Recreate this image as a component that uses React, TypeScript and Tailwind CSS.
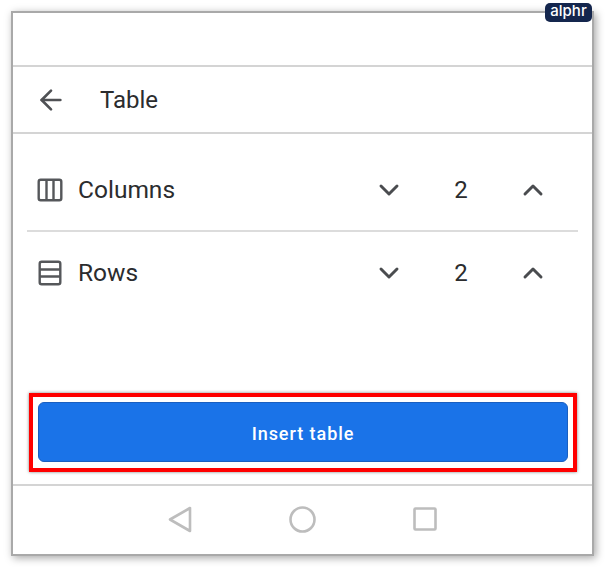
import { ArrowLeft, ChevronDown, ChevronUp } from "lucide-react";

function ColumnsIcon() {
  return (
    <svg width="26" height="24" viewBox="0 0 26 24" fill="none" stroke="#55575a" strokeWidth="2.4">
      <rect x="1.7" y="1.7" width="22.6" height="20.6" rx="2" />
      <path d="M9.5 2v20M16.5 2v20" />
    </svg>
  );
}

function RowsIcon() {
  return (
    <svg width="24" height="26" viewBox="0 0 24 26" fill="none" stroke="#55575a" strokeWidth="2.4">
      <rect x="1.7" y="1.7" width="20.6" height="22.6" rx="2" />
      <path d="M2 9.5h20M2 16.5h20" />
    </svg>
  );
}

function Stepper({ label, icon, bordered }: { label: string; icon: React.ReactNode; bordered?: boolean }) {
  return (
    <div className={`flex items-center pl-[10px] ${bordered ? "h-[98px] border-b-2 border-[#dcdcdc] pt-[16px]" : "h-[84px] pb-[2px]"}`}>
      <div className="flex w-[26px] justify-center">{icon}</div>
      <span className="ml-[15px] flex-1 text-[24.5px] text-[#2b2c2e]">{label}</span>
      <ChevronDown className="mr-[48px] h-[32px] w-[32px] text-[#4a4c4f]" strokeWidth={2.2} />
      <span className="w-[16px] text-center text-[24px] text-[#2b2c2e]">2</span>
      <ChevronUp className="ml-[48px] mr-[29px] h-[32px] w-[32px] text-[#4a4c4f]" strokeWidth={2.2} />
    </div>
  );
}

export default function App() {
  return (
    <div className="h-[567px] w-[605px] bg-white pl-[11px] pt-[11px] font-['Roboto',sans-serif]">
      <div className="relative h-[545px] w-[583px] border-2 border-[#a9a9a9] bg-white shadow-[2px_2px_8px_rgba(0,0,0,0.35)]">
        {/* alphr badge */}
        <div className="absolute right-[0px] top-[-10px] flex h-[19px] w-[47px] items-center justify-center rounded-[5px] bg-[#14264d] pb-[3px] font-['Inter',sans-serif] text-[15px] font-medium text-white">
          alphr
        </div>

        <div className="h-[54px] border-b-2 border-[#d4d4d4]" />

        {/* Header */}
        <div className="flex h-[67px] items-center border-b-2 border-[#d4d4d4] pl-[22px]">
          <ArrowLeft className="h-[32px] w-[32px] text-[#4f5154]" strokeWidth={2} />
          <span className="ml-[33px] text-[24px] text-[#2b2c2e]">Table</span>
        </div>

        {/* Steppers */}
        <div className="px-[14px]">
          <Stepper label="Columns" icon={<ColumnsIcon />} bordered />
          <Stepper label="Rows" icon={<RowsIcon />} />
        </div>

        {/* Insert table */}
        <div className="ml-[16px] mt-[77px] h-[79px] w-[548px] border-4 border-[#ff0000] px-[5px] pt-[5px] shadow-[0_0_3px_rgba(0,0,0,0.5)]">
          <button className="flex h-[60px] w-full items-center justify-center rounded-[6px] border border-[#1a5fc0] bg-[#1a73e8] pt-[2px] text-[18px] font-medium tracking-[0.95px] text-white">
            Insert table
          </button>
        </div>

        {/* Android nav bar */}
        <div className="mt-[12px] flex h-[70px] items-center justify-center gap-[97px] border-t-2 border-[#d4d4d4] pb-[2px]">
          <svg width="24" height="27" viewBox="0 0 24 27" fill="none" stroke="#bdbdbd" strokeWidth="2.6" strokeLinejoin="round">
            <path d="M22 2v23L2 13.5z" />
          </svg>
          <svg width="27" height="27" viewBox="0 0 27 27" fill="none" stroke="#bdbdbd" strokeWidth="2.6">
            <circle cx="13.5" cy="13.5" r="12" />
          </svg>
          <svg width="24" height="24" viewBox="0 0 24 24" fill="none" stroke="#bdbdbd" strokeWidth="2.6" strokeLinejoin="round">
            <rect x="1.5" y="1.5" width="21" height="21" rx="1" />
          </svg>
        </div>
      </div>
    </div>
  );
}
